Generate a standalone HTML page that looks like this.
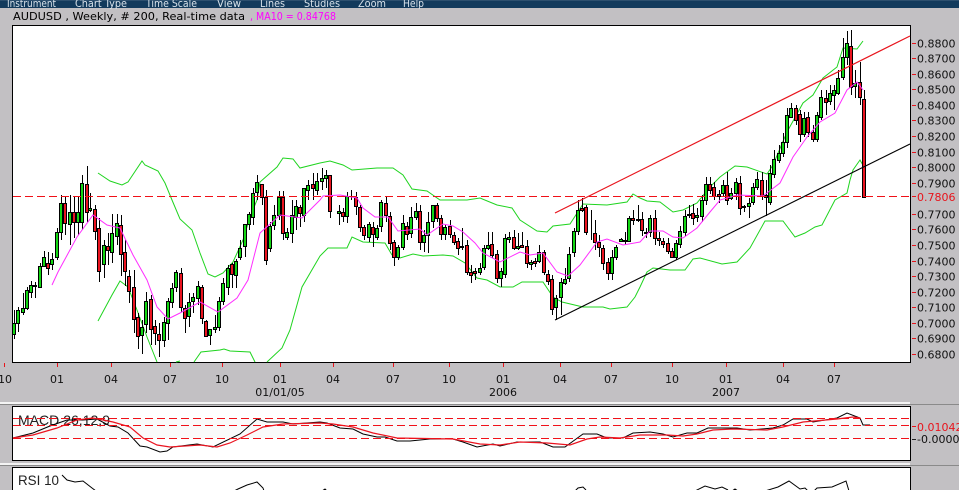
<!DOCTYPE html>
<html><head><meta charset="utf-8"><title>AUDUSD</title>
<style>
html,body{margin:0;padding:0;width:959px;height:490px;overflow:hidden;background:#c2c0c3}
svg{display:block;position:absolute;left:0;top:0}
text{font-family:"DejaVu Sans",sans-serif;font-size:11px}
</style></head><body>
<svg width="959" height="490" viewBox="0 0 959 490">
<rect width="959" height="490" fill="#c2c0c3"/>
<rect width="959" height="8" fill="#123a5c"/>
<rect y="0" width="959" height="1" fill="#2c4f6e"/>
<g fill="#d8e2ea" style="font-family:'Liberation Sans',sans-serif">
<text x="7" y="7" textLength="49" lengthAdjust="spacingAndGlyphs">Instrument</text>
<text x="75" y="7" textLength="52" lengthAdjust="spacingAndGlyphs">Chart Type</text>
<text x="146" y="7" textLength="51" lengthAdjust="spacingAndGlyphs">Time Scale</text>
<text x="217" y="7" textLength="24" lengthAdjust="spacingAndGlyphs">View</text>
<text x="260" y="7" textLength="25" lengthAdjust="spacingAndGlyphs">Lines</text>
<text x="304" y="7" textLength="36" lengthAdjust="spacingAndGlyphs">Studies</text>
<text x="358" y="7" textLength="28" lengthAdjust="spacingAndGlyphs">Zoom</text>
<text x="403" y="7" textLength="21" lengthAdjust="spacingAndGlyphs">Help</text>
</g>
<text x="13" y="20" fill="#000" textLength="232" lengthAdjust="spacingAndGlyphs">AUDUSD , Weekly, # 200, Real-time data</text>
<text x="250" y="20" fill="#ff00ff" textLength="86" lengthAdjust="spacingAndGlyphs">, MA10 = 0.84768</text>

<!-- main panel -->
<rect x="12.5" y="25.5" width="898" height="337" fill="#fff" stroke="#000"/>

<!-- ticks right -->
<path stroke="#e8141c" fill="none" d="M912 43.5h4M912 58.5h4M912 74.5h4M912 89.5h4M912 105.5h4M912 120.5h4M912 136.5h4M912 152.5h4M912 167.5h4M912 183.5h4M912 196.5h4M912 214.5h4M912 229.5h4M912 245.5h4M912 261.5h4M912 276.5h4M912 292.5h4M912 307.5h4M912 323.5h4M912 338.5h4M912 354.5h4"/>
<g fill="#111">
<text x="917" y="47.5">0.8800</text><text x="917" y="62.5">0.8700</text><text x="917" y="78.5">0.8600</text><text x="917" y="93.5">0.8500</text><text x="917" y="109.5">0.8400</text><text x="917" y="124.5">0.8300</text><text x="917" y="140.5">0.8200</text><text x="917" y="156.5">0.8100</text><text x="917" y="171.5">0.8000</text><text x="917" y="187.5">0.7900</text><text x="917" y="218.5">0.7700</text><text x="917" y="233.5">0.7600</text><text x="917" y="249.5">0.7500</text><text x="917" y="265.5">0.7400</text><text x="917" y="280.5">0.7300</text><text x="917" y="296.5">0.7200</text><text x="917" y="311.5">0.7100</text><text x="917" y="327.5">0.7000</text><text x="917" y="342.5">0.6900</text><text x="917" y="358.5">0.6800</text>
</g>
<text x="917" y="201" fill="#e8141c">0.7806</text>

<!-- ticks bottom -->
<path stroke="#e8141c" fill="none" d="M4.5 363v4M57.5 363v4M111.5 363v4M170.5 363v4M222.5 363v4M280.5 363v4M333.5 363v4M393.5 363v4M449.5 363v4M503.5 363v4M560.5 363v4M611.5 363v4M672.5 363v4M726.5 363v4M783.5 363v4M834.5 363v4"/>
<g fill="#111" text-anchor="middle">
<text x="5" y="383">10</text><text x="57" y="383">01</text><text x="111" y="383">04</text><text x="170" y="383">07</text><text x="222" y="383">10</text><text x="280" y="383">01</text><text x="333" y="383">04</text><text x="393" y="383">07</text><text x="449" y="383">10</text><text x="503" y="383">01</text><text x="560" y="383">04</text><text x="611" y="383">07</text><text x="672" y="383">10</text><text x="726" y="383">01</text><text x="783" y="383">04</text><text x="834" y="383">07</text>
<text x="280" y="396">01/01/05</text><text x="503" y="396">2006</text><text x="726" y="396">2007</text>
</g>

<!-- bollinger -->
<path fill="none" stroke="#1fd41f" stroke-width="1" d="M98 173L110 181 122 185 128 182 142 161 145 165 158 171 165 183 172 200 180 219 192 230 200 253 208 274 215 277 223 273 233 262 243 240 250 217 257 200 260 182 277 167 283 158 293 159 300 168 320 163 330 161 343 165 352 170 377 168 393 168 403 175 412 189 427 191 440 200 467 200 480 198 497 205 512 208 520 220 537 231 547 232 553 226 570 224 583 204 607 205 627 202 633 194 640 198 647 201 660 202 673 212 683 210 697 203 710 187 720 177 735 166 747 167 767 174 773 165 787 132 803 103 813 95 823 78 837 67 843 48 857 49 863 41"/>
<path fill="none" stroke="#1fd41f" stroke-width="1" d="M98 321L112 295 120 281 128 287 137 310 147 337 157 362M176 362L180 361M194 362L201 352 220 350 224 349 230 351 250 352 255 362M267 362L282 348 290 330 302 287 320 256 328 248 347 248 352 237 363 242 385 243 392 255 400 258 413 254 423 256 443 255 453 256 465 263 477 278 487 280 500 287 513 287 522 282 543 282 553 297 562 302 583 307 603 307 610 309 627 307 635 297 640 287 647 272 653 268 670 270 685 270 693 259 700 258 722 264 737 262 750 248 765 221 783 221 795 237 805 233 815 227 822 225 835 200 847 193 850 180 853 170 860 160 864 167"/>

<!-- wicks -->
<path fill="none" stroke="#000" stroke-width="1" transform="translate(0.5 0)" d="M14 310V339M18 307V332M23 293V315M27 287V310M31 281V298M35 282V298M40 263V287M44 251V267M48 252V275M52 253V270M57 228V260M61 195V240M65 197V235M70 195V245M74 197V238M78 197V235M82 175V230M87 166V222M90 193V212M95 205V240M99 218V282M104 240V278M108 233V265M112 214V263M117 214V245M121 215V276M125 240V286M129 270V303M134 270V333M138 313V349M142 320V354M146 292V333M151 295V345M155 320V345M159 323V357M164 317V347M168 298V340M172 283V308M176 270V292M181 268V312M185 305V333M189 293V327M193 293V313M198 281V305M202 285V324M206 320V337M210 329V345M215 315V333M219 297V331M223 278V305M228 265V295M232 263V288M236 259V288M240 240V260M245 224V257M249 212V230M253 188V225M257 175V200M262 184V205M266 190V265M270 222V252M274 205V230M279 191V220M283 191V240M287 228V240M292 200V243M296 200V230M300 205V227M304 188V222M308 180V200M313 173V200M317 173V195M322 168V190M326 170V188M330 175V218M339 205V225M343 208V222M347 192V223M351 190V200M356 192V215M360 205V232M364 225V240M369 222V242M373 222V247M377 225V240M381 200V232M386 196V222M390 212V250M394 240V266M398 245V260M403 215V250M407 222V240M411 207V238M416 203V220M420 205V250M424 230V252M428 212V253M433 205V228M437 203V222M441 215V240M445 225V240M450 220V238M454 232V245M458 238V255M462 228V250M467 240V275M471 265V283M475 268V280M480 263V275M484 245V270M488 232V250M492 232V258M497 250V283M501 268V287M505 234V278M509 232V243M514 230V250M518 233V250M522 232V248M527 240V268M531 260V270M535 258V267M539 245V263M544 250V275M548 270V285M552 275V315M556 295V320M561 278V315M565 268V285M569 247V282M574 228V257M578 200V235M582 198V212M586 205V235M591 210V240M595 220V250M599 235V257M603 245V270M608 258V280M612 250V280M616 245V260M621 238V242M625 232V245M629 216V242M633 210V225M638 205V222M642 212V236M646 228V238M650 215V237M655 210V245M659 232V246M663 238V248M668 238V254M672 248V258M676 240V260M680 226V248M685 210V236M689 205V218M693 204V225M697 208V222M702 195V222M706 177V205M710 177V194M714 182V200M719 190V203M723 180V196M727 172V205M731 188V200M736 178V200M740 176V215M744 205V212M749 198V218M753 183V205M757 172V190M762 172V200M766 180V216M770 165V205M774 150V178M779 145V163M783 133V157M787 108V148M791 103V118M796 105V125M800 110V142M804 112V137M808 112V137M813 125V142M817 112V142M821 90V120M826 90V115M830 85V105M834 85V110M838 70V95M843 38V80M847 31V65M851 30V95M855 70V98M860 62V105M864 90V198"/>

<!-- green bodies -->
<path fill="#13d613" stroke="#000" d="M12.5 323.5h3v11h-3zM16.5 310.5h3v13h-3zM21.5 308.5h3v4h-3zM25.5 290.5h3v18h-3zM29.5 285.5h3v7h-3zM33.5 285.5h3v1h-3zM38.5 266.5h3v21h-3zM42.5 257.5h3v9h-3zM50.5 259.5h3v5h-3zM55.5 232.5h3v25h-3zM59.5 203.5h3v29h-3zM68.5 212.5h3v12h-3zM76.5 212.5h3v10h-3zM80.5 183.5h3v39h-3zM88.5 208.5h3v2h-3zM102.5 245.5h3v19h-3zM110.5 233.5h3v19h-3zM115.5 223.5h3v13h-3zM140.5 327.5h3v8h-3zM144.5 301.5h3v23h-3zM162.5 322.5h3v18h-3zM166.5 301.5h3v22h-3zM170.5 288.5h3v14h-3zM174.5 272.5h3v15h-3zM187.5 302.5h3v14h-3zM191.5 297.5h3v4h-3zM196.5 286.5h3v12h-3zM208.5 329.5h3v6h-3zM213.5 327.5h3v2h-3zM217.5 301.5h3v26h-3zM221.5 283.5h3v18h-3zM226.5 268.5h3v19h-3zM234.5 261.5h3v14h-3zM238.5 248.5h3v9h-3zM243.5 224.5h3v22h-3zM247.5 214.5h3v10h-3zM251.5 193.5h3v24h-3zM255.5 182.5h3v10h-3zM268.5 226.5h3v22h-3zM272.5 215.5h3v10h-3zM277.5 197.5h3v18h-3zM285.5 232.5h3v5h-3zM290.5 215.5h3v18h-3zM294.5 206.5h3v11h-3zM302.5 188.5h3v27h-3zM306.5 185.5h3v5h-3zM315.5 181.5h3v9h-3zM320.5 178.5h3v3h-3zM324.5 175.5h3v3h-3zM337.5 211.5h3v2h-3zM345.5 196.5h3v20h-3zM367.5 224.5h3v13h-3zM375.5 228.5h3v9h-3zM379.5 202.5h3v24h-3zM396.5 247.5h3v10h-3zM401.5 223.5h3v24h-3zM409.5 217.5h3v16h-3zM414.5 211.5h3v6h-3zM422.5 235.5h3v7h-3zM426.5 222.5h3v13h-3zM431.5 205.5h3v16h-3zM443.5 227.5h3v7h-3zM478.5 268.5h3v4h-3zM482.5 248.5h3v19h-3zM486.5 245.5h3v3h-3zM499.5 271.5h3v7h-3zM503.5 238.5h3v36h-3zM507.5 237.5h3v2h-3zM516.5 246.5h3v2h-3zM529.5 262.5h3v2h-3zM537.5 252.5h3v9h-3zM554.5 298.5h3v9h-3zM559.5 282.5h3v15h-3zM563.5 279.5h3v4h-3zM567.5 254.5h3v24h-3zM572.5 231.5h3v21h-3zM576.5 210.5h3v21h-3zM610.5 257.5h3v16h-3zM614.5 247.5h3v10h-3zM619.5 239.5h3v2h-3zM627.5 218.5h3v23h-3zM648.5 218.5h3v14h-3zM674.5 243.5h3v14h-3zM678.5 231.5h3v13h-3zM683.5 216.5h3v16h-3zM695.5 215.5h3v2h-3zM700.5 200.5h3v16h-3zM704.5 184.5h3v16h-3zM721.5 185.5h3v8h-3zM729.5 193.5h3v5h-3zM734.5 182.5h3v11h-3zM747.5 203.5h3v3h-3zM751.5 187.5h3v15h-3zM755.5 179.5h3v8h-3zM768.5 173.5h3v29h-3zM772.5 159.5h3v15h-3zM777.5 153.5h3v7h-3zM781.5 142.5h3v11h-3zM785.5 115.5h3v27h-3zM789.5 108.5h3v9h-3zM802.5 118.5h3v16h-3zM815.5 115.5h3v24h-3zM819.5 97.5h3v20h-3zM828.5 93.5h3v8h-3zM832.5 90.5h3v5h-3zM836.5 78.5h3v15h-3zM841.5 57.5h3v20h-3zM845.5 43.5h3v14h-3zM853.5 83.5h3v3h-3z"/>

<!-- red bodies -->
<path fill="#ea1420" stroke="#000" d="M46.5 263.5h3v5h-3zM63.5 203.5h3v20h-3zM72.5 212.5h3v10h-3zM85.5 184.5h3v28h-3zM93.5 209.5h3v22h-3zM97.5 228.5h3v43h-3zM106.5 246.5h3v4h-3zM119.5 225.5h3v29h-3zM123.5 252.5h3v19h-3zM127.5 276.5h3v15h-3zM132.5 287.5h3v32h-3zM136.5 317.5h3v19h-3zM149.5 299.5h3v30h-3zM153.5 326.5h3v7h-3zM157.5 334.5h3v6h-3zM179.5 273.5h3v34h-3zM183.5 308.5h3v10h-3zM200.5 287.5h3v31h-3zM204.5 321.5h3v15h-3zM230.5 264.5h3v10h-3zM260.5 184.5h3v13h-3zM264.5 197.5h3v63h-3zM281.5 197.5h3v36h-3zM298.5 207.5h3v6h-3zM311.5 184.5h3v4h-3zM328.5 175.5h3v36h-3zM341.5 212.5h3v4h-3zM354.5 197.5h3v9h-3zM358.5 207.5h3v20h-3zM362.5 227.5h3v8h-3zM371.5 227.5h3v7h-3zM384.5 203.5h3v12h-3zM388.5 216.5h3v27h-3zM392.5 242.5h3v15h-3zM405.5 226.5h3v8h-3zM418.5 211.5h3v31h-3zM435.5 205.5h3v13h-3zM439.5 218.5h3v16h-3zM448.5 226.5h3v8h-3zM452.5 235.5h3v7h-3zM456.5 241.5h3v7h-3zM460.5 246.5h3v1h-3zM465.5 245.5h3v27h-3zM469.5 272.5h3v3h-3zM473.5 271.5h3v2h-3zM490.5 244.5h3v11h-3zM495.5 254.5h3v24h-3zM512.5 237.5h3v11h-3zM520.5 245.5h3v2h-3zM525.5 246.5h3v17h-3zM533.5 261.5h3v2h-3zM542.5 252.5h3v20h-3zM546.5 274.5h3v7h-3zM550.5 279.5h3v30h-3zM580.5 208.5h3v2h-3zM584.5 207.5h3v25h-3zM593.5 233.5h3v9h-3zM597.5 242.5h3v5h-3zM601.5 248.5h3v15h-3zM606.5 262.5h3v11h-3zM623.5 240.5h3v1h-3zM631.5 218.5h3v2h-3zM636.5 219.5h3v1h-3zM640.5 219.5h3v11h-3zM644.5 232.5h3v1h-3zM653.5 218.5h3v20h-3zM657.5 238.5h3v2h-3zM661.5 241.5h3v3h-3zM666.5 243.5h3v8h-3zM670.5 251.5h3v6h-3zM687.5 214.5h3v1h-3zM691.5 213.5h3v5h-3zM708.5 184.5h3v6h-3zM712.5 187.5h3v9h-3zM717.5 194.5h3v2h-3zM725.5 185.5h3v15h-3zM738.5 183.5h3v25h-3zM742.5 206.5h3v1h-3zM760.5 180.5h3v16h-3zM764.5 195.5h3v2h-3zM794.5 108.5h3v12h-3zM798.5 114.5h3v20h-3zM806.5 117.5h3v15h-3zM811.5 132.5h3v7h-3zM824.5 98.5h3v4h-3zM849.5 46.5h3v41h-3zM858.5 82.5h3v15h-3zM862.5 99.5h3v98h-3z"/>

<!-- MA -->
<path fill="none" stroke="#ff2eff" stroke-width="1" d="M52 285L58 272 77 237 93 215 107 225 120 228 133 255 147 280 157 307 168 319 180 313 200 302 218 312 237 298 248 280 260 233 280 215 302 218 315 205 320 200 323 196 340 195 357 198 363 208 375 217 388 217 398 231 420 229 427 235 443 224 453 226 463 232 475 243 483 253 500 262 520 252 530 255 543 253 557 272 568 276 580 265 597 242 607 239 623 245 640 242 650 231 663 231 673 237 683 238 697 228 710 212 720 200 737 195 763 196 780 183 793 157 807 137 820 122 835 113 847 90 857 82 863 90"/>

<!-- trendlines & level -->
<path fill="none" stroke="#e8141c" stroke-width="1.2" d="M555 213L910 36"/>
<path fill="none" stroke="#000" stroke-width="1.1" d="M555 320L910 144"/>
<path fill="none" stroke="#f01018" stroke-width="1" stroke-dasharray="8 4" d="M13 196.5H910"/>

<!-- separators -->
<rect y="402" width="910" height="2" fill="#f4f4f4"/>
<rect y="404" width="959" height="1" fill="#8a8a8a"/>
<rect y="463" width="910" height="2" fill="#f4f4f4"/>
<rect y="465" width="959" height="1" fill="#8a8a8a"/>

<!-- MACD panel -->
<rect x="12.5" y="406.5" width="898" height="54" fill="#fff" stroke="#000"/>
<rect x="14" y="419" width="895" height="19" fill="#fafafa"/>
<text x="18" y="425" fill="#222" style="font-family:'Liberation Sans',sans-serif;font-size:14px" textLength="92" lengthAdjust="spacingAndGlyphs">MACD 26,12,9</text>
<path fill="none" stroke="#000" stroke-width="1" d="M13 438L33 433 50 426 67 420 83 420 97 419 110 426 118 427 128 433 140 446 147 447 160 452 167 451 173 447 197 444 213 447 240 434 257 419 267 422 283 422 293 424 320 422 327 423 340 428 353 429 363 434 377 437 385 437 397 441 410 441 430 439 453 439 463 442 477 447 493 444 500 446 517 442 540 442 553 447 565 447 583 434 597 434 607 438 623 438 633 433 650 432 663 434 673 437 687 433 697 433 708 428 737 428 750 430 773 428 783 425 793 419 807 419 813 422 837 418 847 413 860 418 863 425 870 425"/>
<path fill="none" stroke="#ea1420" stroke-width="1.2" d="M13 438L33 435 57 428 77 420 93 418 113 422 130 427 143 438 157 445 170 447 200 445 217 447 230 443 247 435 263 427 283 424 320 423 333 424 353 427 373 433 397 438 453 439 480 444 500 445 520 442 547 443 570 445 587 439 600 437 620 438 640 435 667 435 683 436 697 434 713 430 733 429 767 430 783 427 803 422 837 419 853 417 860 418"/>
<path fill="none" stroke="#f01018" stroke-dasharray="8 4" d="M13 418.5H910"/>
<path fill="none" stroke="#f01018" stroke-dasharray="8 4" d="M13 425.5H910"/>
<path fill="none" stroke="#f01018" stroke-dasharray="8 4" d="M13 438.5H910"/>
<path stroke="#e8141c" d="M912 426.5h4"/><path stroke="#222" d="M912 439.5h4"/>
<text x="917" y="431" fill="#e8141c">0.01042</text>
<text x="917" y="443" fill="#111">-0.0000</text>

<!-- RSI panel -->
<rect x="12.5" y="467.5" width="898" height="30" fill="#fff" stroke="#000"/>
<text x="18" y="485" fill="#222" style="font-family:'Liberation Sans',sans-serif;font-size:14px" textLength="41" lengthAdjust="spacingAndGlyphs">RSI 10</text>
<path fill="none" stroke="#000" stroke-width="1" d="M62 475L67 480 75 482 83 481 92 488 96 491M234 491L238 489 247 485 257 482 263 488 264 491M322 491L325 489 327 491M575 491L578 488 583 487 586 490M695 491L705 486 715 489 722 487 728 490M732 491L735 489 738 491M765 491L778 487 789 481 800 489 805 488 808 491M814 491L817 488 832 487 846 481 849 491"/>
</svg>
</body></html>
